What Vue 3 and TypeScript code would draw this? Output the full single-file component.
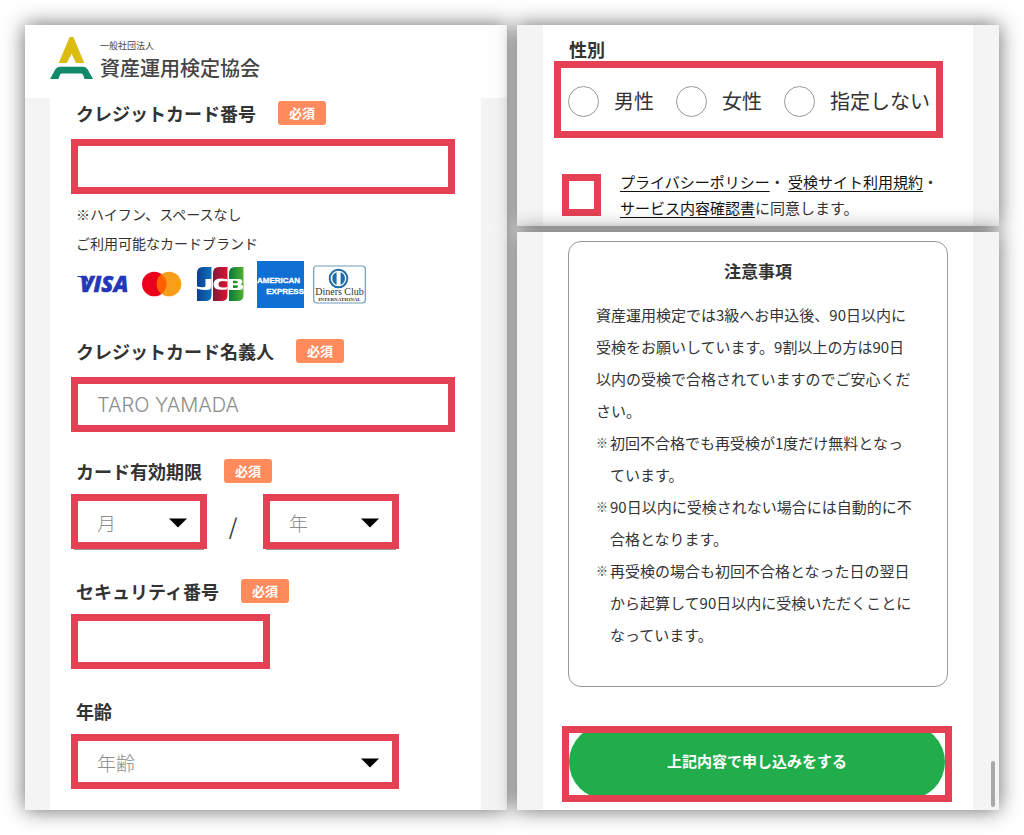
<script setup lang="ts">
import { ref } from 'vue'

interface Option {
  value: string
  label: string
}

const cardNumber = ref('')
const cardHolder = ref('')
const month = ref('')
const year = ref('')
const securityCode = ref('')
const age = ref('')
const gender = ref('')
const agreed = ref(false)

const months: Option[] = Array.from({ length: 12 }, (_, i) => ({ value: String(i + 1), label: `${i + 1}` }))
const years: Option[] = Array.from({ length: 10 }, (_, i) => ({ value: String(2024 + i), label: `${2024 + i}` }))
const ages: Option[] = Array.from({ length: 80 }, (_, i) => ({ value: String(i + 15), label: `${i + 15}` }))

const genders: Option[] = [
  { value: 'male', label: '男性' },
  { value: 'female', label: '女性' },
  { value: 'none', label: '指定しない' },
]

const notes: string[] = [
  '初回不合格でも再受検が1度だけ無料となっています。',
  '90日以内に受検されない場合には自動的に不合格となります。',
  '再受検の場合も初回不合格となった日の翌日から起算して90日以内に受検いただくことになっています。',
]
</script>

<template>
  <main class="page">
    <section class="panel payment">
      <header class="brand">
        <svg class="brand-mark" viewBox="0 0 43 42" aria-hidden="true">
          <path d="M19.6 0h3.8L34.3 26h-8.2l-4.6-9.2L16.9 26H8.7z" fill="#dcbc10" />
          <path d="M0 42 5.4 32.2Q6.800 29.700 9.700 29.700H33.300Q36.200 29.700 37.600 32.200L43 42H34.600L33 37.800Q32.400 36.400 30.900 36.400H12.100Q10.600 36.400 10 37.800L8.400 42z" fill="#12896b" />
        </svg>
        <div class="brand-text">
          <span class="brand-kind">一般社団法人</span>
          <span class="brand-name">資産運用検定協会</span>
        </div>
      </header>

      <div class="sheet form">
        <div class="field field-card">
          <div class="label-row">
            <label for="card-number">クレジットカード番号</label>
            <span class="badge">必須</span>
          </div>
          <input id="card-number" v-model="cardNumber" class="frame text-box" type="text" inputmode="numeric" />
          <p class="hint">※ハイフン、スペースなし</p>
          <p class="hint">ご利用可能なカードブランド</p>
          <div class="cards">
            <svg width="56" height="47" viewBox="0 0 56 47" role="img" aria-label="VISA">
              <text x="3" y="31" class="visa">VISA</text>
              <path d="M0 15h8.500q1.500 0 2 1.800l1.500 6Q8 17 0 15.600z" fill="#2337b8" />
            </svg>
            <svg width="46" height="47" viewBox="0 0 46 47" aria-hidden="true">
              <circle cx="12.300" cy="23" r="12.300" fill="#eb001b" />
              <circle cx="27" cy="23" r="12.300" fill="#f79e1b" />
              <path d="M19.650 13.200a12.300 12.300 0 0 1 0 19.600a12.300 12.300 0 0 1 0-19.600z" fill="#ff5f00" />
            </svg>
            <svg width="51" height="47" viewBox="0 0 51 47" role="img" aria-label="JCB">
              <defs>
                <linearGradient id="jcb-blue"><stop offset="0" stop-color="#0a3f8f" /><stop offset="1" stop-color="#0d73bd" /></linearGradient>
                <linearGradient id="jcb-red"><stop offset="0" stop-color="#7d1a3c" /><stop offset="1" stop-color="#e0122f" /></linearGradient>
                <linearGradient id="jcb-green"><stop offset="0" stop-color="#08793a" /><stop offset="1" stop-color="#4fb02f" /></linearGradient>
              </defs>
              <path d="M6 6h8.500v28q0 6-6 6H0V12q0-6 6-6z" fill="url(#jcb-blue)" />
              <path d="M22 6h8.500v28q0 6-6 6H16V12q0-6 6-6z" fill="url(#jcb-red)" />
              <path d="M38 6h8.500v28q0 6-6 6H32V12q0-6 6-6z" fill="url(#jcb-green)" />
              <path d="M8.500 18h6v7.500q0 3.500-6 3.500-4 0-8.500-1.300v-2.200q8.500 2 8.500-.8z" fill="#fff" />
              <path d="M30.500 18.300v2.200q-9-2-9 2.700t9 2.700v2.300q-14 2.600-14-5t14-4.900z" fill="#fff" />
              <path fill-rule="evenodd" d="M32 18h9.500q4 .3 4 2.800 0 2.100-2.500 2.500 3.100.4 3.100 2.900 0 2.600-3.600 2.800H32zm4 1.800v2.500h3.300q1.600 0 1.600-1.200t-1.600-1.300zm0 4.400V27h3.500q1.600 0 1.600-1.400t-1.600-1.400z" fill="#fff" />
            </svg>
            <svg width="47" height="47" viewBox="0 0 47 47" role="img" aria-label="AMERICAN EXPRESS">
              <rect width="47" height="47" fill="#0f6fd2" />
              <text x="0" y="22" class="amex">AMERICAN</text>
              <text x="47" y="33" class="amex amex-end">EXPRESS</text>
            </svg>
            <svg width="53" height="47" viewBox="0 0 53 47" role="img" aria-label="Diners Club INTERNATIONAL">
              <rect x=".7" y="5" width="51.600" height="37" rx="3" fill="#fff" stroke="#6d9bb9" stroke-width="1.200" />
              <circle cx="25.500" cy="17.500" r="8.800" fill="#fff" stroke="#1f6ea8" stroke-width="2" />
              <path d="M23.600 11.300a6.600 6.600 0 0 0 0 12.400zM27.600 11.300a6.600 6.600 0 0 1 0 12.400z" fill="#1f6ea8" />
              <text x="26.500" y="34" class="diners">Diners Club</text>
              <text x="26.500" y="39.500" class="diners diners-small">INTERNATIONAL</text>
            </svg>
          </div>
        </div>

        <div class="field field-holder">
          <div class="label-row">
            <label for="card-holder">クレジットカード名義人</label>
            <span class="badge">必須</span>
          </div>
          <input id="card-holder" v-model="cardHolder" class="frame text-box" type="text" placeholder="TARO YAMADA" />
        </div>

        <div class="field">
          <div class="label-row">
            <label for="month">カード有効期限</label>
            <span class="badge">必須</span>
          </div>
          <div class="expiry">
            <div class="select-wrap half">
              <select id="month" v-model="month" class="frame select-box">
                <option value="">月</option>
                <option v-for="m in months" :key="m.value" :value="m.value">{{ m.label }}</option>
              </select>
              <svg class="arrow" viewBox="0 0 18 9" aria-hidden="true"><path d="M0 0h18L9 9z" /></svg>
            </div>
            <span class="slash">/</span>
            <div class="select-wrap half">
              <select id="year" v-model="year" class="frame select-box" aria-label="年">
                <option value="">年</option>
                <option v-for="y in years" :key="y.value" :value="y.value">{{ y.label }}</option>
              </select>
              <svg class="arrow" viewBox="0 0 18 9" aria-hidden="true"><path d="M0 0h18L9 9z" /></svg>
            </div>
          </div>
        </div>

        <div class="field">
          <div class="label-row">
            <label for="security">セキュリティ番号</label>
            <span class="badge">必須</span>
          </div>
          <input id="security" v-model="securityCode" class="frame text-box short" type="text" inputmode="numeric" />
        </div>

        <div class="field field-last">
          <div class="label-row">
            <label for="age">年齢</label>
          </div>
          <div class="select-wrap wide">
            <select id="age" v-model="age" class="frame select-box">
              <option value="">年齢</option>
              <option v-for="a in ages" :key="a.value" :value="a.value">{{ a.label }}</option>
            </select>
            <svg class="arrow" viewBox="0 0 18 9" aria-hidden="true"><path d="M0 0h18L9 9z" /></svg>
          </div>
        </div>
      </div>
    </section>

    <div class="column">
      <section class="panel profile">
        <div class="sheet">
          <fieldset class="gender">
            <legend>性別</legend>
            <div class="gender-frame">
              <label v-for="g in genders" :key="g.value" class="choice">
                <input v-model="gender" type="radio" name="gender" :value="g.value" />
                <span>{{ g.label }}</span>
              </label>
            </div>
          </fieldset>
          <div class="consent">
            <input id="agree" v-model="agreed" type="checkbox" aria-labelledby="agree-text" />
            <p id="agree-text">
              <a href="#privacy">プライバシーポリシー</a>・ <a href="#terms">受検サイト利用規約</a>・<a href="#service">サービス内容確認書</a>に同意します。
            </p>
          </div>
        </div>
      </section>

      <section class="panel confirm">
        <div class="sheet">
          <article class="notice">
            <h2>注意事項</h2>
            <p>資産運用検定では3級へお申込後、90日以内に受検をお願いしています。9割以上の方は90日以内の受検で合格されていますのでご安心ください。</p>
            <ul>
              <li v-for="note in notes" :key="note"><span class="mark">※</span><span>{{ note }}</span></li>
            </ul>
          </article>
          <div class="submit-frame">
            <button type="button" class="submit">上記内容で申し込みをする</button>
          </div>
        </div>
        <span class="scroll-thumb"></span>
      </section>
    </div>
  </main>
</template>

<style>
body {
  margin: 0;
  background: #fff;
}
</style>

<style scoped>
.page,
.page * {
  box-sizing: border-box;
}

.page {
  --red: #e54053;
  display: grid;
  grid-template-columns: 1fr 1fr;
  gap: 10px;
  min-height: 100vh;
  padding: 25px;
  overflow: hidden;
  color: #333;
  font-family: "Noto Sans CJK JP", sans-serif;
  font-size: 15px;
}

p,
h2,
ul {
  margin: 0;
  padding: 0;
}

input,
select,
button {
  margin: 0;
  font-family: inherit;
}

.panel {
  position: relative;
  display: flex;
  flex-direction: column;
  background: #f4f4f4;
  box-shadow: 0 0 20px rgba(0, 0, 0, 0.6);
}

.column {
  display: flex;
  flex-direction: column;
  gap: 6px;
}

.confirm {
  flex: 1;
}

.sheet {
  flex: 1;
  margin: 0 26px;
  background: #fff;
}

.brand {
  display: flex;
  align-items: flex-start;
  gap: 7px;
  height: 73px;
  padding: 12px 25px 0;
  background: #fff;
}

.brand-mark {
  width: 43px;
  height: 42px;
}

.brand-text {
  display: flex;
  flex-direction: column;
  padding-top: 2px;
  color: #444;
}

.brand-kind {
  font-size: 9px;
  line-height: 14px;
}

.brand-name {
  font-size: 20px;
  font-weight: 500;
  line-height: 29px;
}

.form {
  margin-left: 25px;
  padding: 3px 26px 20px 21px;
}

.field {
  min-height: 120px;
}

.field-card {
  padding-bottom: 31px;
}

.field-last {
  min-height: 0;
}

.label-row {
  display: flex;
  align-items: center;
  gap: 22px;
  height: 24px;
  margin-bottom: 11px;
  padding-left: 5px;
  font-size: 18px;
  font-weight: 700;
}

.field-card .label-row,
.field-holder .label-row {
  margin-bottom: 14px;
}

.badge {
  width: 48px;
  border-radius: 3px;
  background: #ff8b5d;
  color: #fff;
  font-size: 13px;
  line-height: 24px;
  text-align: center;
}

.frame {
  display: block;
  width: 100%;
  height: 55px;
  border: 7px solid var(--red);
  border-radius: 0;
  outline: none;
  background: #fff;
  padding: 0 19px;
}

.text-box {
  color: #333;
  font-family: Inter, "Noto Sans CJK JP", sans-serif;
  font-size: 20px;
  font-weight: 300;
}

.text-box::placeholder {
  color: #8c8c8c;
  opacity: 1;
}

.short {
  width: 199px;
}

.select-wrap {
  position: relative;
}

.half {
  width: 136px;
}

.wide {
  width: 328px;
}

.select-box {
  appearance: none;
  padding-top: 2px;
  color: #8c8c8c;
  font-size: 19px;
  font-weight: 300;
}

.half .select-box {
  box-shadow: 0 4px 0 -3px #999;
}

.arrow {
  position: absolute;
  top: 24px;
  right: 20px;
  width: 18px;
  height: 10px;
  pointer-events: none;
}

.expiry {
  display: flex;
  align-items: center;
}

.slash {
  width: 56px;
  padding: 6px 4px 0 0;
  font-size: 22px;
  line-height: 28px;
  text-align: center;
}

.hint {
  padding-left: 5px;
  font-size: 14px;
  line-height: 29px;
}

.text-box + .hint {
  margin-top: 6px;
}

.cards {
  display: flex;
  gap: 9px;
  margin-top: 3px;
  padding-left: 6px;
}

.visa {
  fill: #2337b8;
  stroke: #2337b8;
  stroke-width: 0.5px;
  font-family: "Open Sans", sans-serif;
  font-size: 22px;
  font-style: italic;
  font-weight: 800;
}

.amex {
  fill: #fff;
  stroke: #fff;
  stroke-width: 0.3px;
  font-family: "Liberation Sans", sans-serif;
  font-size: 8px;
  font-weight: 700;
}

.amex-end {
  text-anchor: end;
}

.diners {
  fill: #333;
  font-family: "Liberation Serif", serif;
  font-size: 10px;
  text-anchor: middle;
}

.diners-small {
  font-size: 5px;
  font-weight: 700;
}

.gender {
  min-width: 0;
  margin: 0;
  padding: 0 30px 0 11px;
  border: 0;
}

.gender legend {
  padding: 12px 0 0 15px;
  font-size: 18px;
  font-weight: 700;
  line-height: 24px;
}

.gender-frame {
  display: flex;
  align-items: center;
  gap: 22px;
  height: 77px;
  padding: 3px 0 0 7px;
  border: 7px solid var(--red);
}

.choice {
  display: flex;
  align-items: center;
  gap: 15px;
  font-size: 20px;
  line-height: 30px;
  white-space: nowrap;
}

.choice input {
  appearance: none;
  width: 31px;
  height: 31px;
  border: 1px solid #999;
  border-radius: 50%;
  background: #fff;
}

.choice input:checked {
  border: 9px solid #22ad4c;
}

.consent {
  display: flex;
  gap: 19px;
  padding: 31px 25px 5px 19px;
}

.consent input {
  appearance: none;
  flex: none;
  width: 39px;
  height: 42px;
  margin-top: 5px;
  border: 7px solid var(--red);
  background: #fff;
}

.consent input:checked {
  background: #22ad4c;
}

.consent p {
  line-height: 26px;
}

.consent a {
  color: #111;
  text-decoration: underline;
  text-underline-offset: 3px;
}

.notice {
  margin: 9px 25px 0;
  padding: 17px 27px 35px;
  border: 1px solid #999;
  border-radius: 13px;
  line-height: 32px;
}

.notice h2 {
  margin-bottom: 16px;
  font-size: 17px;
  font-weight: 700;
  line-height: 24px;
  text-align: center;
}

.notice p,
.notice ul {
  padding-right: 5px;
}

.notice ul {
  list-style: none;
}

.notice li {
  display: flex;
}

.mark {
  flex: none;
  width: 14px;
  font-size: 12px;
}

.submit-frame {
  height: 76px;
  margin: 39px 21px 8px 19px;
  overflow: hidden;
  border: 7px solid var(--red);
  background: #fff;
}

.submit {
  display: block;
  width: 100%;
  height: 74px;
  margin-top: -8px;
  padding: 0 0 4px;
  border: 0;
  border-radius: 37px;
  background: #22ad4c;
  color: #fff;
  font-size: 15px;
  font-weight: 700;
}

.scroll-thumb {
  position: absolute;
  right: 4px;
  bottom: 3px;
  width: 4px;
  height: 46px;
  border-radius: 2px;
  background: #a8a8a8;
}
</style>
